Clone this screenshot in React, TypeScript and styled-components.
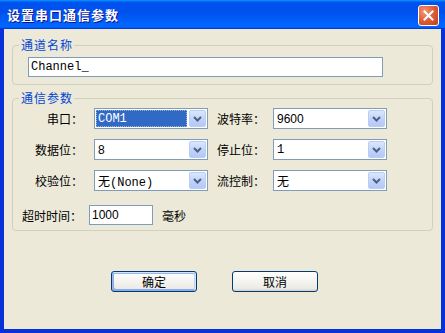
import * as React from 'react'
import styled, { createGlobalStyle } from 'styled-components'

const GlobalStyle = createGlobalStyle`
    html, body {
        margin: 0;
        padding: 0;
        background: #ece9d8;
    }
    body {
        font-family: "Liberation Sans", "Noto Sans CJK SC", sans-serif;
        font-size: 12px;
    }
`

const cjk = `"Noto Sans CJK SC", "Liberation Sans", sans-serif`

const Window = styled.div`
    width: 445px;
    height: 333px;
    display: flex;
    flex-direction: column;
    background: #0831d9;
    box-sizing: border-box;
    overflow: hidden;
`

const TitleBar = styled.div`
    height: 29px;
    flex: none;
    display: flex;
    align-items: center;
    justify-content: space-between;
    padding: 0 6px 0 7px;
    background: linear-gradient(180deg, #0997ff, #0053ee 8%, #0050ee 40%, #0066ff 88%, #0066ff 93%, #005bff 95%, #003dd7 96%, #003dd7);
`

const Title = styled.div`
    font-family: ${cjk};
    font-weight: bold;
    font-size: 13px;
    letter-spacing: 1px;
    color: #fff;
    text-shadow: 1px 1px #0f1089;
    line-height: 16px;
`

const CloseButton = styled.div`
    width: 21px;
    height: 21px;
    box-sizing: border-box;
    border: 1px solid #fff;
    border-radius: 3px;
    background: radial-gradient(circle at 30% 30%, #f09a7c, #e0603c 45%, #c6431c 90%);
    display: flex;
    align-items: center;
    justify-content: center;
    margin-top: 1px;
`

const Body = styled.div`
    flex: 1;
    margin: 0 4px 4px 4px;
    background: #ece9d8;
    display: flex;
    flex-direction: column;
    padding: 0 8px;
`

const Group = styled.fieldset<{$top: number, $bottom: number}>`
    margin: ${p => p.$top}px 0 0 0;
    padding: 0 0 ${p => p.$bottom}px 0;
    width: 421px;
    box-sizing: border-box;
    border: 1px solid #d0d0bf;
    border-radius: 4px;
    min-width: 0;
`

const Legend = styled.legend`
    font-family: ${cjk};
    font-size: 12px;
    letter-spacing: 1px;
    line-height: 14px;
    color: #0046d5;
    padding: 0 1px 0 2px;
    margin-left: 6px;
`

const TextInput = styled.div<{$width: number, $mono?: boolean}>`
    width: ${p => p.$width}px;
    height: 20px;
    box-sizing: border-box;
    border: 1px solid #7f9db9;
    background: #fff;
    font-family: ${p => p.$mono ? `"Liberation Mono", monospace` : `"Liberation Sans", sans-serif`};
    font-size: 12px;
    line-height: 18px;
    padding-left: 2px;
    color: #000;
`

const NameInput = styled(TextInput)`
    margin: 5px 0 0 15px;
`

const Grid = styled.div`
    display: grid;
    grid-template-columns: 81px 123px 56px 114px;
    grid-auto-rows: 21px;
    row-gap: 10px;
    margin-top: 3px;
    align-items: center;
`

const Label = styled.div<{$right?: boolean}>`
    font-family: ${cjk};
    font-size: 12px;
    color: #000;
    white-space: nowrap;
    text-align: ${p => p.$right ? 'right' : 'left'};
    padding-right: ${p => p.$right ? '11px' : '0'};
`

const SelectBox = styled.div`
    width: 114px;
    height: 21px;
    box-sizing: border-box;
    border: 1px solid #7f9db9;
    background: #fff;
    display: flex;
    align-items: center;
    padding: 1px;
`

const SelectValue = styled.div<{$mono?: boolean, $active?: boolean}>`
    flex: 1;
    height: 100%;
    display: flex;
    align-items: center;
    box-sizing: border-box;
    margin-right: 2px;
    padding-left: 2px;
    font-family: ${p => p.$mono ? `"Liberation Mono", "Noto Sans CJK SC", monospace` : `"Liberation Sans", "Noto Sans CJK SC", sans-serif`};
    font-size: 12px;
    color: ${p => p.$active ? '#fff' : '#000'};
    background: ${p => p.$active ? '#316ac5' : 'transparent'};
    outline: ${p => p.$active ? '1px dotted #9cb6e0' : 'none'};
    outline-offset: -1px;
    white-space: nowrap;
`

const DropButton = styled.div`
    width: 17px;
    height: 17px;
    box-sizing: border-box;
    border: 1px solid #bacdf5;
    border-radius: 2px;
    background: linear-gradient(180deg, #dce6fd, #c3d4fa 50%, #b4c8f6);
    display: flex;
    align-items: center;
    justify-content: center;
`

const TimeoutRow = styled.div`
    display: flex;
    align-items: center;
    margin: 14px 0 0 9px;
    gap: 7px;
`

const Unit = styled.span`
    font-family: ${cjk};
    font-size: 12px;
    margin-left: 2px;
`

const ButtonRow = styled.div`
    display: flex;
    gap: 35px;
    margin: 40px 0 0 99px;
`

const Button = styled.div<{$default?: boolean}>`
    width: 86px;
    height: 21px;
    box-sizing: border-box;
    border: 1px solid #003c74;
    border-radius: 3px;
    background: linear-gradient(180deg, #fff, #ecebe6 86%, #d6d0c5);
    box-shadow: ${p => p.$default ? 'inset -1px 1px #cee7ff, inset 1px 2px #98b8ea, inset -2px 2px #bcd4f6, inset 1px -1px #89ade4, inset 2px -2px #89ade4' : 'none'};
    display: flex;
    align-items: center;
    justify-content: center;
    font-family: ${cjk};
    font-size: 12px;
    color: #000;
`

function Select({value, mono, active}: {value: string, mono?: boolean, active?: boolean}) {
    return (
        <SelectBox>
            <SelectValue $mono={mono} $active={active}>{value}</SelectValue>
            <DropButton>
                <svg width="9" height="6" viewBox="0 0 9 6">
                    <polyline points="1,1 4.5,4.5 8,1" fill="none" stroke="#4d6185" strokeWidth="2" />
                </svg>
            </DropButton>
        </SelectBox>
    )
}

// rows of the serial settings grid: [left label, value, right label, value]
const rows = [
    { l: '串口：', lv: 'COM1', lm: true, la: true, r: '波特率：', rv: '9600' },
    { l: '数据位：', lv: '8', r: '停止位：', rv: '1', rm: true },
    { l: '校验位：', lv: '无(None)', lm: true, r: '流控制：', rv: '无' },
]

export default function App() {
    return (
        <>
            <GlobalStyle />
            <Window>
                <TitleBar>
                    <Title>设置串口通信参数</Title>
                    <CloseButton>
                        <svg width="11" height="11" viewBox="0 0 11 11">
                            <path d="M1.5 1.5 L9.5 9.5 M9.5 1.5 L1.5 9.5" stroke="#fff" strokeWidth="2" strokeLinecap="square" />
                        </svg>
                    </CloseButton>
                </TitleBar>
                <Body>
                    <Group $top={9} $bottom={7}>
                        <Legend>通道名称</Legend>
                        <NameInput $width={355} $mono>Channel_</NameInput>
                    </Group>
                    <Group $top={6} $bottom={5}>
                        <Legend>通信参数</Legend>
                        <Grid>
                            {rows.map((r, i) => (
                                <React.Fragment key={i}>
                                    <Label $right>{r.l}</Label>
                                    <Select value={r.lv} mono={r.lm} active={r.la} />
                                    <Label>{r.r}</Label>
                                    <Select value={r.rv} mono={r.rm} />
                                </React.Fragment>
                            ))}
                        </Grid>
                        <TimeoutRow>
                            <Label>超时时间：</Label>
                            <TextInput $width={64}>1000</TextInput>
                            <Unit>毫秒</Unit>
                        </TimeoutRow>
                    </Group>
                    <ButtonRow>
                        <Button $default>确定</Button>
                        <Button>取消</Button>
                    </ButtonRow>
                </Body>
            </Window>
        </>
    )
}
